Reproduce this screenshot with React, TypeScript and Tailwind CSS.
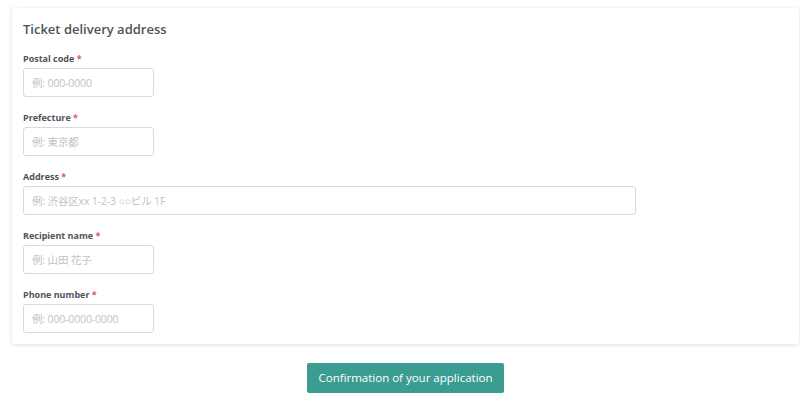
const fields = [
  { label: "Postal code", placeholder: "例: 000-0000", wide: false },
  { label: "Prefecture", placeholder: "例: 東京都", wide: false },
  { label: "Address", placeholder: "例: 渋谷区xx 1-2-3 ○○ビル 1F", wide: true },
  { label: "Recipient name", placeholder: "例: 山田 花子", wide: false },
  { label: "Phone number", placeholder: "例: 000-0000-0000", wide: false },
];

export default function App() {
  return (
    <main
      className="min-h-screen bg-white pt-2"
      style={{ fontFamily: '"Open Sans", "Liberation Sans", "Noto Sans CJK JP", sans-serif' }}
    >
      <section className="ml-3 w-[787px] rounded-[3px] bg-white px-[11px] pt-[11px] pb-[11px] shadow-[0_1px_4px_rgba(0,0,0,0.14)]">
        <h2 className="text-[13px] font-semibold leading-[20px] text-[#4f5358]">
          Ticket delivery address
        </h2>

        <div className="mt-[14px] flex flex-col gap-[15px]">
          {fields.map((f) => (
            <div key={f.label}>
              <label className="block text-[9px] font-bold leading-[12px] text-[#4f5358]">
                {f.label} <span className="text-[#e0555f]">*</span>
              </label>
              <input
                placeholder={f.placeholder}
                className={`mt-[3px] block h-[29px] rounded-[3px] border border-[#d9d9d9] bg-white px-[8px] text-[10.5px] tracking-[-0.15px] text-[#333] outline-none placeholder:text-[#c2c2c2] ${
                  f.wide ? "w-[613px]" : "w-[131px]"
                }`}
              />
            </div>
          ))}
        </div>
      </section>

      <div className="ml-3 flex w-[787px] justify-center pt-[19px]">
        <button className="h-[30px] w-[197px] rounded-[2px] bg-[#3b9c92] text-[11.5px] text-white">
          Confirmation of your application
        </button>
      </div>
    </main>
  );
}
